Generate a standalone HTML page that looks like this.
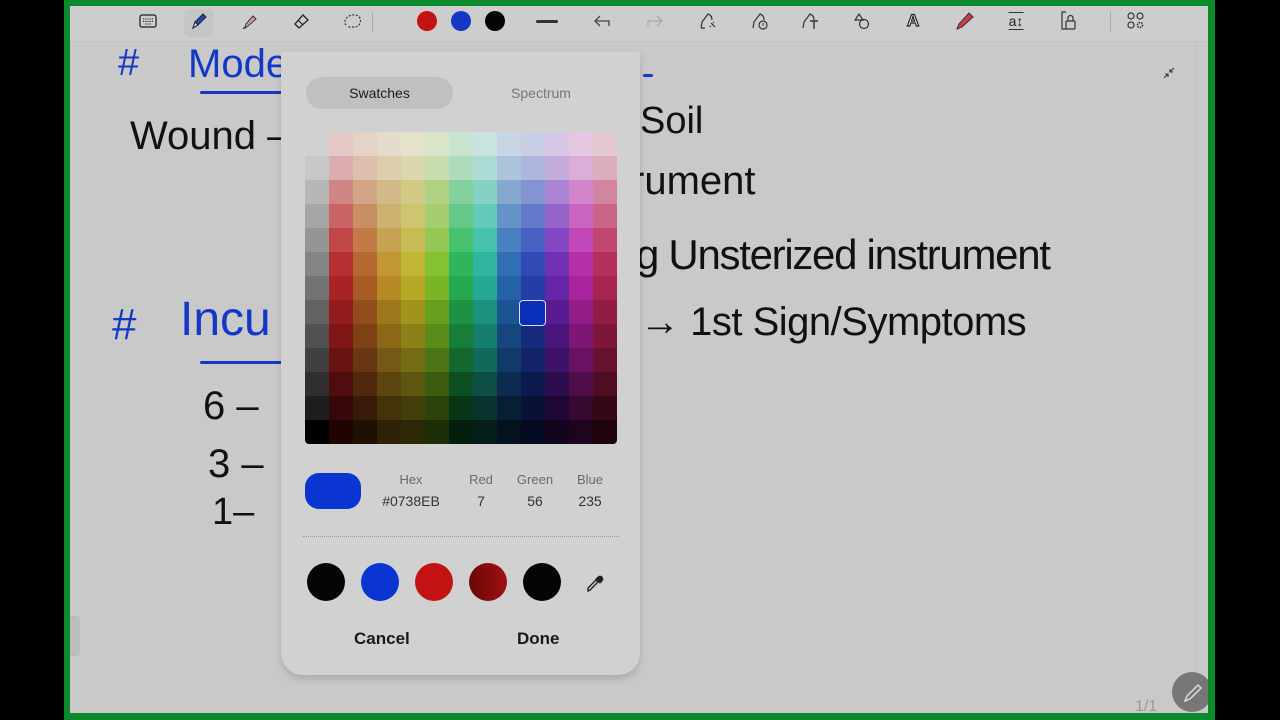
<!DOCTYPE html>
<html><head><meta charset="utf-8"><style>
*{margin:0;padding:0;box-sizing:border-box}
body{width:1280px;height:720px;background:#000;position:relative;overflow:hidden;font-family:"Liberation Sans",sans-serif}
#frame{position:absolute;left:64px;top:0;width:1151px;height:720px;background:#0a8a2c}
#canvas{position:absolute;left:70px;top:6px;width:1138px;height:707px;background:#c9c9c9;overflow:hidden}
#tb{position:absolute;left:0;top:0;width:1138px;height:36px;background:#cdcdcd;border-bottom:1px solid #c2c2c2}
.ic{position:absolute;top:15px;transform:translate(-50%,-50%)}
.hw{position:absolute;white-space:nowrap;font-family:"Liberation Sans",sans-serif;line-height:1}
.b{color:#1238c8}.k{color:#111}
.ul{position:absolute;height:3px;background:#1238c8;border-radius:2px}
#panel{position:absolute;left:281px;top:52px;width:359px;height:623px;background:#d1d1d1;border-radius:0 0 22px 22px;box-shadow:0 4px 8px rgba(0,0,0,.15)}
.tab{position:absolute;top:25px;height:32px;border-radius:16px;font-size:14px;text-align:center;line-height:32px}
#grid{position:absolute;left:24px;top:80px;width:312px;height:312px;border-radius:0 0 4px 4px;overflow:hidden}
.c{position:absolute;width:24px;height:24px}
.lbl{position:absolute;font-size:13px;color:#6a6a6a;text-align:center;width:60px}
.val{position:absolute;font-size:14px;color:#333;text-align:center;width:70px}
.sw{position:absolute;top:511px;width:38px;height:38px;border-radius:50%}
.btn{position:absolute;top:577px;font-size:17px;font-weight:bold;color:#1a1a1a}
</style></head><body>
<div id="frame"></div>
<div id="canvas">
 <div id="tb">
  <svg class="ic" style="left:78px" width="18" height="14" viewBox="0 0 18 14"><rect x="1" y="1" width="16" height="12" rx="2" fill="none" stroke="#222" stroke-width="1.3"/><path d="M4 5h10M4 7.5h10M6 10h6" stroke="#222" stroke-width="1.1" stroke-dasharray="1.2 1"/></svg>
  <div style="position:absolute;left:114px;top:3px;width:30px;height:28px;border-radius:6px;background:#c5c5c5"></div>
  <svg class="ic" style="left:129px" width="20" height="20" viewBox="0 0 20 20"><path d="M4 17l2-6 8-8 3 3-8 8z" fill="#1f47c8" stroke="#222" stroke-width="1"/><path d="M4 17l2-6 3 3z" fill="#ddd" stroke="#222"/></svg>
  <svg class="ic" style="left:180px" width="20" height="20" viewBox="0 0 20 20"><path d="M5 17l1-4 7-8 3 3-8 7z" fill="#d9a0b0" stroke="#333" stroke-width="1"/><path d="M3 18l3-3" stroke="#333"/></svg>
  <svg class="ic" style="left:232px" width="20" height="20" viewBox="0 0 20 20"><path d="M7 17l-4-4 8-9 5 5z" fill="none" stroke="#222" stroke-width="1.3"/><path d="M6 9l5 5" stroke="#222" stroke-width="1.2"/></svg>
  <svg class="ic" style="left:283px" width="22" height="18" viewBox="0 0 22 18"><path d="M4 13c-3-3 0-9 6-10 6-1 10 3 8 8-1 3-3 4-6 4H6" fill="none" stroke="#333" stroke-width="1.2" stroke-dasharray="2 1.6"/></svg>
  <div style="position:absolute;left:302px;top:6px;width:1px;height:20px;background:#aaa"></div>
  <div style="position:absolute;left:347px;top:5px;width:20px;height:20px;border-radius:50%;background:#c41212"></div>
  <div style="position:absolute;left:381px;top:5px;width:20px;height:20px;border-radius:50%;background:#1438c4"></div>
  <div style="position:absolute;left:415px;top:5px;width:20px;height:20px;border-radius:50%;background:#050505"></div>
  <div style="position:absolute;left:466px;top:14px;width:22px;height:3px;border-radius:2px;background:#333"></div>
  <svg class="ic" style="left:532px" width="18" height="14" viewBox="0 0 18 14"><path d="M16 12V7H3M7 2L2 7l5 5" fill="none" stroke="#444" stroke-width="1.3"/></svg>
  <svg class="ic" style="left:585px" width="18" height="14" viewBox="0 0 18 14"><path d="M2 12V7h13M11 2l5 5-5 5" fill="none" stroke="#aaa" stroke-width="1.3"/></svg>
  <svg class="ic" style="left:638px" width="20" height="20" viewBox="0 0 20 20"><path d="M3 17l1-6 6-8c3 1 4 3 4 6" fill="none" stroke="#333" stroke-width="1.2"/><path d="M3 17h4M13 12l4 4M15 11l1 1M12 15l1 1" stroke="#333" stroke-width="1.2"/></svg>
  <svg class="ic" style="left:690px" width="20" height="20" viewBox="0 0 20 20"><path d="M3 17l1-6 6-8c3 1 4 3 4 6" fill="none" stroke="#333" stroke-width="1.2"/><circle cx="13" cy="14" r="4" fill="none" stroke="#333" stroke-width="1.2"/><path d="M13 12v3" stroke="#333"/></svg>
  <svg class="ic" style="left:740px" width="20" height="20" viewBox="0 0 20 20"><path d="M3 17l1-6 6-8c3 1 4 3 4 6" fill="none" stroke="#333" stroke-width="1.2"/><path d="M10 10h8M14 10v8" stroke="#333" stroke-width="1.4"/></svg>
  <svg class="ic" style="left:792px" width="20" height="20" viewBox="0 0 20 20"><path d="M7 3l4 6H3z" fill="none" stroke="#333" stroke-width="1.2"/><circle cx="12" cy="13" r="4.5" fill="none" stroke="#333" stroke-width="1.2"/></svg>
  <div class="ic" style="left:843px;font-size:17px;font-weight:bold;color:#fff;-webkit-text-stroke:1.2px #222">A</div>
  <svg class="ic" style="left:895px" width="22" height="22" viewBox="0 0 22 22"><path d="M3 19l2-5 10-11 4 4-11 10z" fill="#d2394a" stroke="#333" stroke-width="1"/></svg>
  <div class="ic" style="left:946px;font-size:14px;color:#222;border-top:1.5px solid #333;border-bottom:1.5px solid #333;line-height:14px;padding:1px 0">a↕</div>
  <svg class="ic" style="left:998px" width="20" height="22" viewBox="0 0 20 22"><path d="M8 2H4v17h4" fill="none" stroke="#333" stroke-width="1.2"/><rect x="8" y="11" width="9" height="8" rx="1" fill="none" stroke="#333" stroke-width="1.2"/><path d="M10 11V8a2.5 2.5 0 015 0v3" fill="none" stroke="#333" stroke-width="1.2"/></svg>
  <div style="position:absolute;left:1040px;top:6px;width:1px;height:20px;background:#aaa"></div>
  <svg class="ic" style="left:1066px" width="20" height="20" viewBox="0 0 20 20"><circle cx="5" cy="5" r="3" fill="none" stroke="#333" stroke-width="1.2"/><circle cx="14" cy="5" r="3" fill="none" stroke="#333" stroke-width="1.2"/><circle cx="5" cy="14" r="3" fill="none" stroke="#333" stroke-width="1.2"/><circle cx="14" cy="14" r="2.5" fill="none" stroke="#333" stroke-width="1.6" stroke-dasharray="1.5 1"/></svg>
 </div>
 <div style="position:absolute;left:0;top:37px;width:1127px;height:670px;border-right:1px solid #c1c1c1"></div>
 <svg style="position:absolute;left:1092px;top:60px" width="14" height="14" viewBox="0 0 14 14"><path d="M2 12l4-4M3 8h3v3M12 2L8 6M8 3v3h3" fill="none" stroke="#333" stroke-width="1.1"/></svg>

 <div class="hw b" style="left:48px;top:38px;font-size:38px">#</div>
 <div class="hw b" style="left:118px;top:38px;font-size:40px">Mode</div>
 <div class="ul" style="left:130px;top:85px;width:90px"></div>
 <div class="hw k" style="left:60px;top:110px;font-size:40px">Wound —</div>
 <div class="hw b" style="left:42px;top:297px;font-size:44px">#</div>
 <div class="hw b" style="left:110px;top:290px;font-size:48px">Incu</div>
 <div class="ul" style="left:130px;top:355px;width:90px"></div>
 <div class="hw k" style="left:133px;top:380px;font-size:40px">6 –</div>
 <div class="hw k" style="left:138px;top:438px;font-size:40px">3 –</div>
 <div class="hw k" style="left:142px;top:487px;font-size:38px">1–</div>

 <div class="hw k" style="left:570px;top:96px;font-size:38px">Soil</div>
 <div class="hw k" style="left:561px;top:155px;font-size:40px">rument</div>
 <div class="hw k" style="left:566px;top:228px;font-size:42px;letter-spacing:-1.3px">g Unsterized instrument</div>
 <div class="hw k" style="left:570px;top:296px;font-size:40px;letter-spacing:-0.5px">→ 1st Sign/Symptoms</div>
 <div class="ul" style="left:573px;top:68px;width:10px"></div>

 <div style="position:absolute;left:-8px;top:610px;width:18px;height:40px;background:#bdbdbd;border-radius:4px"></div>
 <div style="position:absolute;left:1065px;top:692px;font-size:16px;color:#9a9a9a">1/1</div>
 <div style="position:absolute;left:1102px;top:666px;width:40px;height:40px;border-radius:50%;background:#777"></div>
 <svg style="position:absolute;left:1112px;top:676px" width="22" height="22" viewBox="0 0 22 22"><path d="M3 19l2-5 11-11 3 3-11 11z" fill="none" stroke="#ddd" stroke-width="1.5"/></svg>
</div>

<div id="panel">
 <div class="tab" style="left:25px;width:147px;background:#c0c0c0;color:#1a1a1a">Swatches</div>
 <div class="tab" style="left:185px;width:150px;color:#777">Spectrum</div>
 <div id="grid"></div>
 <div style="position:absolute;left:238px;top:248px;width:27px;height:26px;border:1.5px solid #dde;border-radius:4px;background:#0a2fb8"></div>
 <div style="position:absolute;left:24px;top:421px;width:56px;height:36px;border-radius:14px;background:#0a35d0"></div>
 <div class="lbl" style="left:100px;top:420px">Hex</div>
 <div class="val" style="left:95px;top:441px">#0738EB</div>
 <div class="lbl" style="left:170px;top:420px">Red</div>
 <div class="val" style="left:165px;top:441px">7</div>
 <div class="lbl" style="left:224px;top:420px">Green</div>
 <div class="val" style="left:219px;top:441px">56</div>
 <div class="lbl" style="left:279px;top:420px">Blue</div>
 <div class="val" style="left:274px;top:441px">235</div>
 <div style="position:absolute;left:22px;top:484px;width:316px;border-top:1px dotted #999"></div>
 <div class="sw" style="left:26px;background:#050505"></div>
 <div class="sw" style="left:80px;background:#0a35d0"></div>
 <div class="sw" style="left:134px;background:#c21212"></div>
 <div class="sw" style="left:188px;background:linear-gradient(90deg,#6a0808,#a01010)"></div>
 <div class="sw" style="left:242px;background:#050505"></div>
 <svg style="position:absolute;left:304px;top:520px" width="22" height="22" viewBox="0 0 22 22"><path d="M3 19l2-1 8-8-2-2-8 8z" fill="none" stroke="#222" stroke-width="1.4"/><path d="M11 7l4 4M13 5a2.5 2.5 0 014 4l-2 2-4-4z" fill="#222" stroke="#222"/></svg>
 <div class="btn" style="left:73px">Cancel</div>
 <div class="btn" style="left:236px">Done</div>
</div>

<script>
var g=document.getElementById('grid');
var hues=[0,25,42,55,85,140,170,212,228,270,305,340];
var L=[84,77,67,59,52,45,40,34,29,24,18,12,7];
var S=[35,40,45,48,50,58,65,68,70,70,72,75,75];
var h='';
for(var r=0;r<13;r++){
 if(r>0){var gv=Math.round(200-(r-1)*17);if(r==12)gv=0;h+='<div class="c" style="left:0;top:'+(r*24)+'px;background:rgb('+gv+','+gv+','+gv+')"></div>';}
 for(var c=0;c<12;c++){
  var hu=hues[c];var l=L[r];var s=S[r];
  if(hu>=42&&hu<=85)l=l+(r>2?3:0);
  h+='<div class="c" style="left:'+((c+1)*24)+'px;top:'+(r*24)+'px;background:hsl('+hu+','+s+'%,'+l+'%)"></div>';
 }
}
g.innerHTML=h;
</script>
</body></html>
